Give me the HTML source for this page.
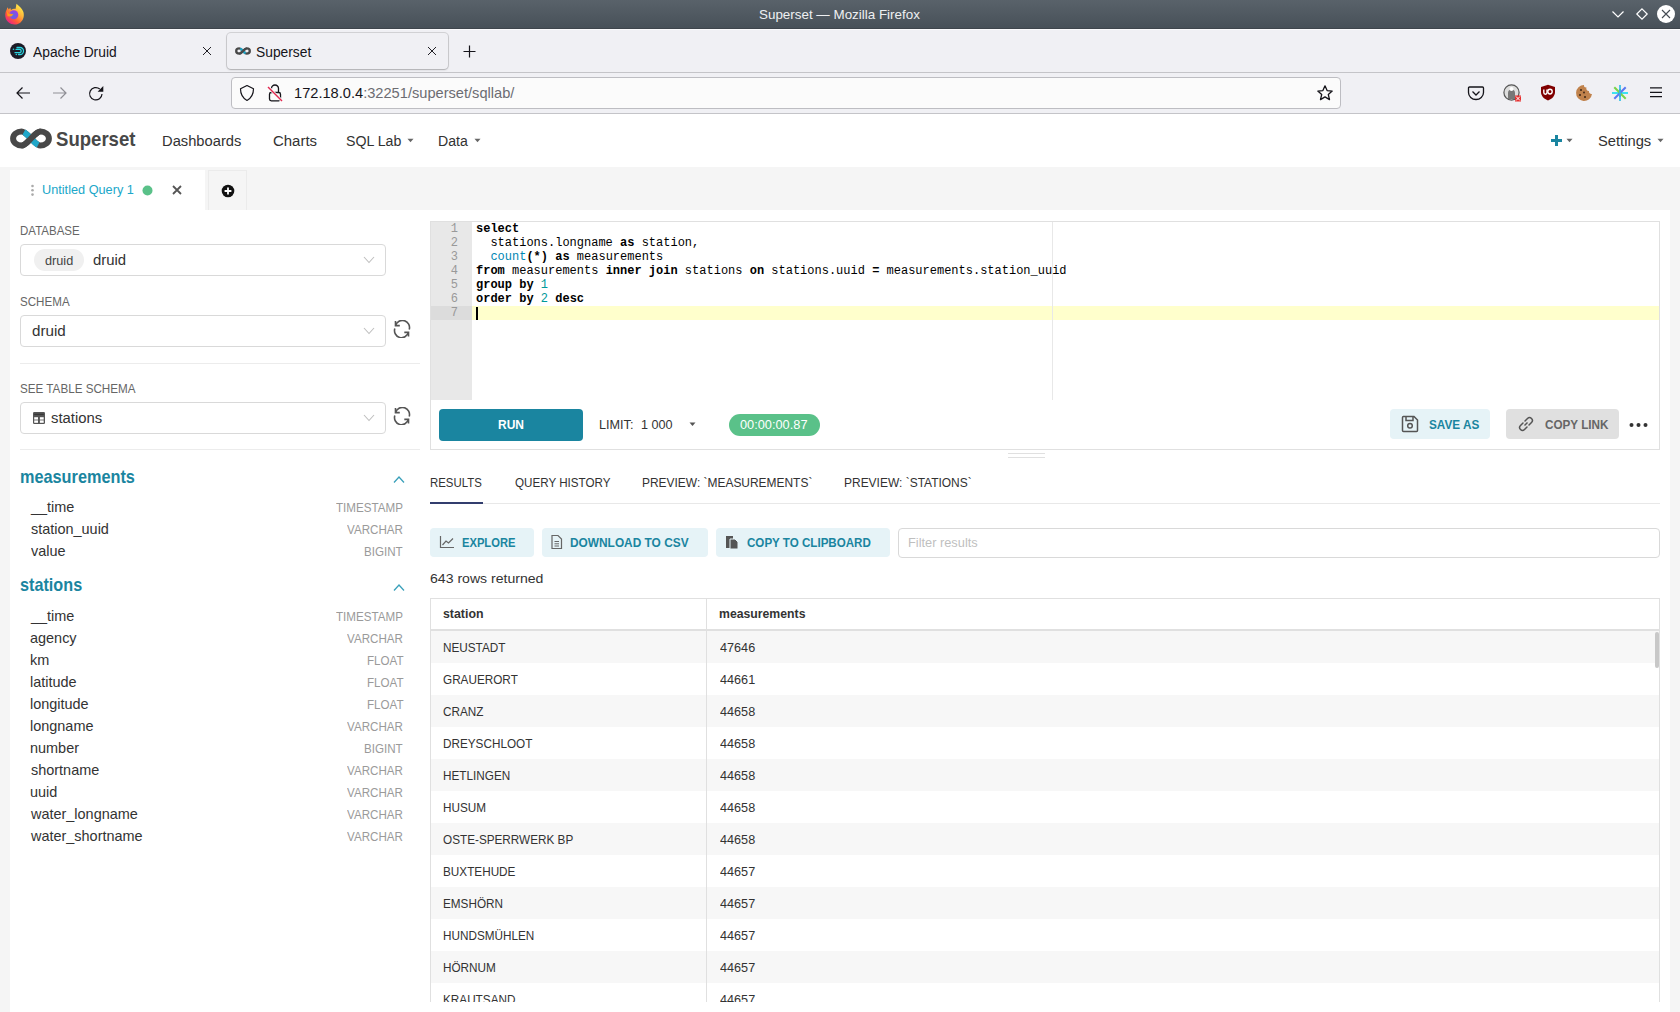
<!DOCTYPE html>
<html><head><meta charset="utf-8"><style>
*{margin:0;padding:0;box-sizing:border-box}
html,body{width:1680px;height:1012px;overflow:hidden;background:#fff;position:relative}
.r{position:absolute}
.tx{position:absolute;white-space:pre;line-height:normal}
</style></head><body>
<div class="r" style="left:0px;top:0px;width:1680px;height:29px;background:linear-gradient(#59626a,#475058)"></div>
<div class="r" style="left:0px;top:28px;width:1680px;height:1px;background:#3e454c"></div>
<svg class="r" style="left:3px;top:2px" width="22" height="24" viewBox="0 0 22 24"><defs><linearGradient id="ffo" x1="0.85" y1="0.1" x2="0.2" y2="0.95"><stop offset="0" stop-color="#fff04a"/><stop offset="0.35" stop-color="#ffb43a"/><stop offset="0.7" stop-color="#ff5a36"/><stop offset="1" stop-color="#e8208a"/></linearGradient>
<radialGradient id="ffp" cx="0.45" cy="0.6" r="0.6"><stop offset="0" stop-color="#5e6cdc"/><stop offset="1" stop-color="#9a3ee8"/></radialGradient></defs>
<path d="M13.5 1.8 C16 4 19 6.5 20.2 9.5 C21.5 13 20.8 17.5 17.8 20.2 C14.5 23.2 9 23.3 5.5 20.3 C2 17.3 1.3 12 3.5 8 L4.5 5.2 L5.8 7.4 L7.2 5.8 L8 8 C9.5 6.8 11.2 6.6 12.5 7 Z" fill="url(#ffo)"/>
<circle cx="10.8" cy="12.8" r="4.5" fill="url(#ffp)"/>
<path d="M3.8 8.5 L5.5 11.5 L10.5 12.3 L8.2 14.5 L4.5 14.2 Z" fill="#ff9a1a"/></svg>
<svg class="r" style="left:1608px;top:4px" width="72" height="22" viewBox="0 0 72 22"><polyline points="4.5,7.5 10,13 15.5,7.5" fill="none" stroke="#fff" stroke-width="1.2"/>
<polygon points="34,4.8 39.2,10 34,15.2 28.8,10" fill="none" stroke="#fff" stroke-width="1.2"/>
<circle cx="58" cy="10" r="9" fill="#fff"/><path d="M54 6 L62 14 M62 6 L54 14" stroke="#454b53" stroke-width="1.1"/></svg>
<div class="r" style="left:0px;top:29px;width:1680px;height:43px;background:#f0f0f4"></div>
<div class="r" style="left:0px;top:29px;width:1680px;height:1px;background:#fafafc"></div>
<div class="r" style="left:0px;top:72px;width:1680px;height:1px;background:#c4c4c8"></div>
<svg class="r" style="left:10px;top:43px" width="16" height="16" viewBox="0 0 16 16"><circle cx="8" cy="8" r="8" fill="#1c1a25"/>
<path d="M7 4.5 H10 A3.5 3.5 0 0 1 10 11.5 H8.5 M6 6.3 H9.5 A1.7 1.7 0 0 1 9.5 9.7 H5" fill="none" stroke="#2ad4e0" stroke-width="1.3" stroke-linecap="round"/>
<circle cx="3.5" cy="6.3" r="0.8" fill="#2ad4e0"/><circle cx="6.3" cy="11.5" r="0.8" fill="#2ad4e0"/></svg>
<svg class="r" style="left:201px;top:45px" width="12" height="12" viewBox="0 0 12 12"><path d="M2 2 L10 10 M10 2 L2 10" stroke="#15141a" stroke-width="0.95"/></svg>
<div class="r" style="left:227px;top:33px;width:221px;height:36px;background:#f0f0f4;border-radius:4px;box-shadow:0 0 0 1px rgba(0,0,0,.12),0 1px 2px rgba(0,0,0,.18)"></div>
<svg class="r" style="left:235px;top:47px" width="16" height="8" viewBox="0 0 16 8"><g fill="none" stroke-width="2.3" stroke="#484848">
<path d="M8 4 C9.5 5.5 10.5 6.6 11.7 6.6 A3.1 2.6 0 0 0 11.7 1.4 C10.5 1.4 9.5 2.5 8 4 C6.5 5.5 5.5 6.6 4.3 6.6 A3.1 2.6 0 0 1 4.3 1.4 C5.5 1.4 6.5 2.5 8 4 Z"/>
<path d="M4.3 1.4 C5.5 1.4 6.5 2.5 8 4 C9.5 5.5 10.5 6.6 11.7 6.6" stroke="#20a7c9" stroke-dasharray="0 1 7 100"/>
<path d="M4.3 6.6 C5.5 6.6 6.5 5.5 8 4 C9.5 2.5 10.5 1.4 11.7 1.4"/>
</g></svg>
<svg class="r" style="left:426px;top:45px" width="12" height="12" viewBox="0 0 12 12"><path d="M2 2 L10 10 M10 2 L2 10" stroke="#15141a" stroke-width="0.95"/></svg>
<svg class="r" style="left:462px;top:44px" width="15" height="15" viewBox="0 0 15 15"><path d="M7.5 1.5 V13.5 M1.5 7.5 H13.5" stroke="#15141a" stroke-width="1.2"/></svg>
<div class="r" style="left:0px;top:73px;width:1680px;height:40px;background:#f0f0f4"></div>
<div class="r" style="left:0px;top:113px;width:1680px;height:1px;background:#c4c4c8"></div>
<svg class="r" style="left:14px;top:85px" width="20" height="16" viewBox="0 0 20 16"><path d="M16 8 H3 M8.5 2.5 L3 8 L8.5 13.5" fill="none" stroke="#15141a" stroke-width="1.2"/></svg>
<svg class="r" style="left:50px;top:85px" width="20" height="16" viewBox="0 0 20 16"><path d="M3 8 H16 M10.5 2.5 L16 8 L10.5 13.5" fill="none" stroke="#8f8f95" stroke-width="1.2"/></svg>
<svg class="r" style="left:87px;top:85px" width="18" height="17" viewBox="0 0 18 17"><path d="M15 9 A6.2 6.2 0 1 1 12.8 4" fill="none" stroke="#15141a" stroke-width="1.2"/><path d="M16.3 1 V6.8 H10.6 Z" fill="#15141a"/></svg>
<div class="r" style="left:231px;top:77px;width:1110px;height:32px;background:#fbfbfb;border:1px solid #bdbdc2;border-radius:4px"></div>
<svg class="r" style="left:239px;top:84px" width="16" height="18" viewBox="0 0 16 18"><path d="M8 1.5 L14.5 4.8 C14.5 10 12.5 14 8 16.5 C3.5 14 1.5 10 1.5 4.8 Z" fill="none" stroke="#15141a" stroke-width="1.2" stroke-linejoin="round"/></svg>
<svg class="r" style="left:266px;top:83px" width="18" height="20" viewBox="0 0 18 20"><path d="M5.5 5.5 A3.5 3.5 0 0 1 12.5 5.5 V9.5" fill="none" stroke="#15141a" stroke-width="1.3"/><rect x="3.5" y="9.5" width="11" height="8.3" rx="1.8" fill="none" stroke="#15141a" stroke-width="1.3"/><path d="M2 4 L16 18" stroke="#fbfbfb" stroke-width="3"/><path d="M2 4 L16 18" stroke="#e22850" stroke-width="1.4"/></svg>
<svg class="r" style="left:1316px;top:84px" width="18" height="18" viewBox="0 0 18 18"><path d="M9 1.8 L11.1 6.6 L16.2 7.1 L12.3 10.5 L13.5 15.6 L9 12.9 L4.5 15.6 L5.7 10.5 L1.8 7.1 L6.9 6.6 Z" fill="none" stroke="#15141a" stroke-width="1.3" stroke-linejoin="round"/></svg>
<svg class="r" style="left:1467px;top:85px" width="18" height="16" viewBox="0 0 18 16"><path d="M2.5 2 H15.5 A1 1 0 0 1 16.5 3 V7.5 A7.5 7 0 0 1 1.5 7.5 V3 A1 1 0 0 1 2.5 2 Z" fill="none" stroke="#15141a" stroke-width="1.3"/><path d="M5.5 6.5 L9 10 L12.5 6.5" fill="none" stroke="#15141a" stroke-width="1.3"/></svg>
<svg class="r" style="left:1503px;top:84px" width="19" height="18" viewBox="0 0 19 18"><circle cx="8.5" cy="8.5" r="7.6" fill="#ddd" stroke="#555" stroke-width="1.2"/><path d="M5 15 V9 A3.5 3.5 0 0 1 12 9 V15" fill="#777"/><circle cx="8.5" cy="5" r="2" fill="#fff"/><rect x="12" y="11.5" width="6" height="6" fill="#e53030"/><path d="M13 12.5 L17 16.5 M17 12.5 L13 16.5" stroke="#fff" stroke-width="1"/></svg>
<svg class="r" style="left:1540px;top:84px" width="16" height="17" viewBox="0 0 16 17"><path d="M8 0.8 L15 3 V8 C15 12 12 15 8 16.5 C4 15 1 12 1 8 V3 Z" fill="#800000"/><path d="M3.8 5.5 V8.6 A1.6 1.6 0 0 0 7 8.6 V5.5" fill="none" stroke="#fff" stroke-width="1.4"/><ellipse cx="10" cy="7.6" rx="2.2" ry="2.4" fill="none" stroke="#fff" stroke-width="1.4"/></svg>
<svg class="r" style="left:1575px;top:84px" width="18" height="18" viewBox="0 0 18 18"><path d="M9 1 A8 8 0 1 0 17 10 A2.5 2.5 0 0 1 14 7 A2.5 2.5 0 0 1 11.5 3.5 A2.3 2.3 0 0 1 9 1 Z" fill="#c0824c"/><circle cx="6" cy="6" r="1" fill="#3a2414"/><circle cx="5" cy="11" r="1" fill="#3a2414"/><circle cx="10" cy="13" r="1" fill="#3a2414"/><circle cx="9" cy="8.5" r="0.9" fill="#3a2414"/></svg>
<svg class="r" style="left:1611px;top:84px" width="18" height="18" viewBox="0 0 18 18"><path d="M9 1 V17" stroke="#4fc8e8" stroke-width="2"/><path d="M1 9 H17" stroke="#3de0f0" stroke-width="2"/><path d="M3.3 3.3 L14.7 14.7" stroke="#78d448" stroke-width="2"/><path d="M14.7 3.3 L3.3 14.7" stroke="#5a78f0" stroke-width="2"/><path d="M9 5 V13" stroke="#3ab0e0" stroke-width="2"/></svg>
<svg class="r" style="left:1648px;top:85px" width="16" height="14" viewBox="0 0 16 14"><path d="M2 2.8 H14 M2 7.4 H14 M2 11.6 H14" stroke="#15141a" stroke-width="1.3"/></svg>
<div class="r" style="left:0px;top:114px;width:1680px;height:53px;background:#fff"></div>
<svg class="r" style="left:10px;top:127px" width="42" height="23" viewBox="0 0 42 23"><g fill="none" stroke-width="6" stroke="#484848">
<path d="M21 11.5 C25 15.5 27.5 18.5 30.4 18.5 A8.5 7 0 0 0 30.4 4.5 C27.5 4.5 25 7.5 21 11.5 C17 15.5 14.5 18.5 11.6 18.5 A8.5 7 0 0 1 11.6 4.5 C14.5 4.5 17 7.5 21 11.5 Z"/>
<path d="M11.6 4.5 C14.5 4.5 17 7.5 21 11.5 C25 15.5 27.5 18.5 30.4 18.5" stroke="#20a7c9" stroke-dasharray="0 2.4 19.2 100"/>
<path d="M11.6 18.5 C14.5 18.5 17 15.5 21 11.5 C25 7.5 27.5 4.5 30.4 4.5"/>
</g></svg>
<svg class="r" style="left:406.5px;top:138px" width="7" height="5" viewBox="0 0 7 5"><path d="M0.5 0.8 H6.5 L3.5 4.2 Z" fill="#666"/></svg>
<svg class="r" style="left:473.5px;top:138px" width="7" height="5" viewBox="0 0 7 5"><path d="M0.5 0.8 H6.5 L3.5 4.2 Z" fill="#666"/></svg>
<svg class="r" style="left:1565.5px;top:138px" width="7" height="5" viewBox="0 0 7 5"><path d="M0.5 0.8 H6.5 L3.5 4.2 Z" fill="#666"/></svg>
<svg class="r" style="left:1657.0px;top:138px" width="7" height="5" viewBox="0 0 7 5"><path d="M0.5 0.8 H6.5 L3.5 4.2 Z" fill="#666"/></svg>
<svg class="r" style="left:1550px;top:134px" width="13" height="13" viewBox="0 0 13 13"><path d="M6.5 1 V12 M1 6.5 H12" stroke="#1a85a0" stroke-width="3"/></svg>
<div class="r" style="left:0px;top:167px;width:1680px;height:845px;background:#f5f5f5"></div>
<div class="r" style="left:10px;top:170px;width:195px;height:42px;background:#fff"></div>
<div class="r" style="left:208px;top:170px;width:39px;height:40px;background:#f5f5f5;border:1px solid #ebebeb;border-bottom:none"></div>
<div class="r" style="left:10px;top:210px;width:1660px;height:802px;background:#fff"></div>
<svg class="r" style="left:30px;top:184px" width="6" height="13" viewBox="0 0 6 13"><circle cx="2.5" cy="2" r="1.3" fill="#aaa"/><circle cx="2.5" cy="6.3" r="1.3" fill="#aaa"/><circle cx="2.5" cy="10.6" r="1.3" fill="#aaa"/></svg>
<svg class="r" style="left:142px;top:185px" width="11" height="11" viewBox="0 0 11 11"><circle cx="5.5" cy="5.5" r="5" fill="#5ac189"/></svg>
<svg class="r" style="left:171px;top:184px" width="12" height="12" viewBox="0 0 12 12"><path d="M2 2 L10 10 M10 2 L2 10" stroke="#555" stroke-width="1.8"/></svg>
<svg class="r" style="left:221px;top:184px" width="14" height="14" viewBox="0 0 14 14"><circle cx="7" cy="7" r="6.3" fill="#111"/><path d="M7 3.6 V10.4 M3.6 7 H10.4" stroke="#fff" stroke-width="1.8"/></svg>
<div class="r" style="left:20px;top:244px;width:366px;height:32px;border:1px solid #d9d9d9;border-radius:4px;background:#fff"></div>
<div class="r" style="left:34px;top:249px;width:50px;height:22px;background:#f0f0f0;border-radius:11px"></div>
<div class="r" style="left:20px;top:315px;width:366px;height:32px;border:1px solid #d9d9d9;border-radius:4px;background:#fff"></div>
<div class="r" style="left:20px;top:363px;width:400px;height:1px;background:#ececec"></div>
<div class="r" style="left:20px;top:402px;width:366px;height:32px;border:1px solid #d9d9d9;border-radius:4px;background:#fff"></div>
<svg class="r" style="left:33px;top:412px" width="12" height="12" viewBox="0 0 12 12"><rect x="0" y="0" width="12" height="12" rx="1.2" fill="#555"/><rect x="1.2" y="1.8" width="9.6" height="1" fill="#333"/><rect x="1.2" y="5.2" width="3.8" height="2.4" fill="#fff"/><rect x="6.9" y="5.2" width="3.8" height="2.4" fill="#fff"/><rect x="1.2" y="8.4" width="3.8" height="2.4" fill="#fff"/><rect x="6.9" y="8.4" width="3.8" height="2.4" fill="#fff"/></svg>
<div class="r" style="left:20px;top:449px;width:400px;height:1px;background:#ececec"></div>
<svg class="r" style="left:363px;top:256px" width="12" height="8" viewBox="0 0 12 8"><path d="M1 1 L6 6.5 L11 1" fill="none" stroke="#bfbfbf" stroke-width="1.1"/></svg>
<svg class="r" style="left:363px;top:327px" width="12" height="8" viewBox="0 0 12 8"><path d="M1 1 L6 6.5 L11 1" fill="none" stroke="#bfbfbf" stroke-width="1.1"/></svg>
<svg class="r" style="left:363px;top:414px" width="12" height="8" viewBox="0 0 12 8"><path d="M1 1 L6 6.5 L11 1" fill="none" stroke="#bfbfbf" stroke-width="1.1"/></svg>
<svg class="r" style="left:393px;top:320px" width="18" height="18" viewBox="0 0 18 18"><g fill="none" stroke="#555" stroke-width="1.6"><path d="M2.6 5.4 A7 7 0 0 1 16.2 9.5"/><path d="M2.5 1 V5.6 H6.8"/><path d="M1.8 8.6 A7 7 0 0 0 15.4 12.6"/><path d="M11.3 12.4 H15.5 V16.6"/></g></svg>
<svg class="r" style="left:393px;top:407px" width="18" height="18" viewBox="0 0 18 18"><g fill="none" stroke="#555" stroke-width="1.6"><path d="M2.6 5.4 A7 7 0 0 1 16.2 9.5"/><path d="M2.5 1 V5.6 H6.8"/><path d="M1.8 8.6 A7 7 0 0 0 15.4 12.6"/><path d="M11.3 12.4 H15.5 V16.6"/></g></svg>
<svg class="r" style="left:393px;top:475px" width="12" height="9" viewBox="0 0 12 9"><path d="M1 7.5 L6 2 L11 7.5" fill="none" stroke="#3aa0ba" stroke-width="1.3"/></svg>
<svg class="r" style="left:393px;top:583px" width="12" height="9" viewBox="0 0 12 9"><path d="M1 7.5 L6 2 L11 7.5" fill="none" stroke="#3aa0ba" stroke-width="1.3"/></svg>
<div class="r" style="left:430px;top:221px;width:1230px;height:180px;border:1px solid #e0e0e0;background:#fff"></div>
<div class="r" style="left:431px;top:222px;width:41px;height:178px;background:#e8e8e8"></div>
<div class="r" style="left:472px;top:306px;width:1187px;height:14px;background:#ffffcc"></div>
<div class="r" style="left:431px;top:306px;width:41px;height:14px;background:#dcdcdc"></div>
<div class="r" style="left:1052px;top:222px;width:1px;height:178px;background:#e8e8e8"></div>
<div class="r" style="left:476px;top:307px;width:2px;height:13px;background:#000"></div>
<div class="r" style="left:430px;top:400px;width:1230px;height:50px;border:1px solid #e0e0e0;border-top:none;background:#fff"></div>
<div class="r" style="left:439px;top:409px;width:144px;height:32px;background:#1a85a0;border-radius:4px"></div>
<svg class="r" style="left:689px;top:422px" width="8" height="5" viewBox="0 0 8 5"><path d="M0.5 0.5 H6.5 L3.5 4 Z" fill="#555"/></svg>
<div class="r" style="left:729px;top:414px;width:91px;height:22px;background:#5ac189;border-radius:11px"></div>
<div class="r" style="left:1390px;top:409px;width:100px;height:30px;background:#e6f3f7;border-radius:4px"></div>
<svg class="r" style="left:1400px;top:414px" width="20" height="20" viewBox="0 0 20 20"><path d="M3 2.5 H14 L17.5 6 V16.5 A1 1 0 0 1 16.5 17.5 H3.5 A1 1 0 0 1 2.5 16.5 V3.5 A1 1 0 0 1 3.5 2.5 Z" fill="none" stroke="#555" stroke-width="1.5"/><path d="M6 2.5 V6.5 H13 V2.5" fill="none" stroke="#555" stroke-width="1.5"/><circle cx="10" cy="11.8" r="2.3" fill="none" stroke="#555" stroke-width="1.5"/></svg>
<div class="r" style="left:1506px;top:409px;width:113px;height:30px;background:#e0e0e0;border-radius:4px"></div>
<svg class="r" style="left:1516px;top:414px" width="20" height="20" viewBox="0 0 20 20"><path d="M8.5 11.5 L11.5 8.5" stroke="#555" stroke-width="1.5"/><path d="M7 9 L4.5 11.5 A2.8 2.8 0 0 0 8.5 15.5 L11 13 M9 7 L11.5 4.5 A2.8 2.8 0 0 1 15.5 8.5 L13 11" fill="none" stroke="#555" stroke-width="1.5" stroke-linecap="round"/></svg>
<svg class="r" style="left:1628px;top:421px" width="22" height="8" viewBox="0 0 22 8"><circle cx="3.5" cy="4" r="2" fill="#333"/><circle cx="10.5" cy="4" r="2" fill="#333"/><circle cx="17.5" cy="4" r="2" fill="#333"/></svg>
<div class="r" style="left:1008px;top:453px;width:37px;height:1px;background:#e0e0e0"></div>
<div class="r" style="left:1008px;top:457px;width:37px;height:1px;background:#e0e0e0"></div>
<div class="r" style="left:430px;top:503px;width:1230px;height:1px;background:#e8e8e8"></div>
<div class="r" style="left:430px;top:502px;width:53px;height:2px;background:#323d6e"></div>
<div class="r" style="left:430px;top:528px;width:104px;height:29px;background:#e6f3f7;border-radius:4px"></div>
<div class="r" style="left:542px;top:528px;width:166px;height:29px;background:#e6f3f7;border-radius:4px"></div>
<div class="r" style="left:716px;top:528px;width:174px;height:29px;background:#e6f3f7;border-radius:4px"></div>
<svg class="r" style="left:439px;top:535px" width="16" height="14" viewBox="0 0 16 14"><path d="M1.5 1 V12.5 H15" fill="none" stroke="#666" stroke-width="1.2"/><path d="M3.5 10 L7 6 L9.5 8 L14 3.5" fill="none" stroke="#666" stroke-width="1.2"/></svg>
<svg class="r" style="left:550px;top:534px" width="13" height="16" viewBox="0 0 13 16"><path d="M2 1.5 H8 L11.5 5 V14.5 H2 Z" fill="none" stroke="#666" stroke-width="1.2"/><path d="M4.5 7.5 H9 M4.5 9.8 H9 M4.5 12 H9" stroke="#666" stroke-width="1"/></svg>
<svg class="r" style="left:724px;top:534px" width="16" height="16" viewBox="0 0 16 16"><path d="M2 2 H9 V14 H2 Z" fill="#555"/><path d="M6 5 H11 L14 8 V15 H6 Z" fill="#555" stroke="#e6f3f7" stroke-width="1"/></svg>
<div class="r" style="left:898px;top:528px;width:762px;height:30px;border:1px solid #d9d9d9;border-radius:4px;background:#fff"></div>
<div class="r" style="left:430px;top:598px;width:1230px;height:404px;border:1px solid #e0e0e0;border-bottom:none;background:#fff;overflow:hidden"></div>
<div class="r" style="left:431px;top:629px;width:1228px;height:2px;background:#e0e0e0"></div>
<div class="r" style="left:431px;top:631px;width:1228px;height:32px;background:#f7f7f7"></div>
<div class="r" style="left:431px;top:695px;width:1228px;height:32px;background:#f7f7f7"></div>
<div class="r" style="left:431px;top:759px;width:1228px;height:32px;background:#f7f7f7"></div>
<div class="r" style="left:431px;top:823px;width:1228px;height:32px;background:#f7f7f7"></div>
<div class="r" style="left:431px;top:887px;width:1228px;height:32px;background:#f7f7f7"></div>
<div class="r" style="left:431px;top:951px;width:1228px;height:32px;background:#f7f7f7"></div>
<div class="r" style="left:706px;top:599px;width:1px;height:403px;background:#e0e0e0"></div>
<div class="r" style="left:1655px;top:632px;width:4px;height:36px;background:#c8c8c8;border-radius:2px"></div>
<div class="r" style="left:420px;top:1002px;width:1250px;height:10px;background:#fff"></div>
<div class="tx" style="left:758.60px;top:7.00px;font-family:'Liberation Sans';font-weight:400;font-size:13.5px;color:#eef0f2;transform:scaleX(0.9926);transform-origin:0 0">Superset — Mozilla Firefox</div>
<div class="tx" style="left:32.59px;top:44.00px;font-family:'Liberation Sans';font-weight:400;font-size:14px;color:#15141a;transform:scaleX(0.9859);transform-origin:0 0">Apache Druid</div>
<div class="tx" style="left:256.21px;top:44.00px;font-family:'Liberation Sans';font-weight:400;font-size:14px;color:#15141a;transform:scaleX(0.9858);transform-origin:0 0">Superset</div>
<div class="tx" style="left:293.61px;top:84.00px;font-family:'Liberation Sans';font-weight:400;font-size:15px;color:#15141a;transform:scaleX(0.9752);transform-origin:0 0">172.18.0.4<span style="color:#6c6c72">:32251/superset/sqllab/</span></div>
<div class="tx" style="left:55.90px;top:127.00px;font-family:'Liberation Sans';font-weight:700;font-size:21px;color:#484848;transform:scaleX(0.8841);transform-origin:0 0">Superset</div>
<div class="tx" style="left:161.62px;top:132.00px;font-family:'Liberation Sans';font-weight:400;font-size:15.5px;color:#323232;transform:scaleX(0.9495);transform-origin:0 0">Dashboards</div>
<div class="tx" style="left:273.31px;top:132.00px;font-family:'Liberation Sans';font-weight:400;font-size:15.5px;color:#323232;transform:scaleX(0.9646);transform-origin:0 0">Charts</div>
<div class="tx" style="left:345.63px;top:132.00px;font-family:'Liberation Sans';font-weight:400;font-size:15.5px;color:#323232;transform:scaleX(0.9136);transform-origin:0 0">SQL Lab</div>
<div class="tx" style="left:437.64px;top:132.00px;font-family:'Liberation Sans';font-weight:400;font-size:15.5px;color:#323232;transform:scaleX(0.9096);transform-origin:0 0">Data</div>
<div class="tx" style="left:1597.62px;top:132.00px;font-family:'Liberation Sans';font-weight:400;font-size:15.5px;color:#323232;transform:scaleX(0.9502);transform-origin:0 0">Settings</div>
<div class="tx" style="left:42.21px;top:181.70px;font-family:'Liberation Sans';font-weight:400;font-size:13px;color:#20a7c9;transform:scaleX(0.9777);transform-origin:0 0">Untitled Query 1</div>
<div class="tx" style="left:20.03px;top:224.40px;font-family:'Liberation Sans';font-weight:400;font-size:12.5px;color:#666;transform:scaleX(0.9202);transform-origin:0 0">DATABASE</div>
<div class="tx" style="left:45.14px;top:253.50px;font-family:'Liberation Sans';font-weight:400;font-size:12px;color:#444;transform:scaleX(1.0588);transform-origin:0 0">druid</div>
<div class="tx" style="left:92.59px;top:252.00px;font-family:'Liberation Sans';font-weight:400;font-size:14.7px;color:#333;transform:scaleX(1.0155);transform-origin:0 0">druid</div>
<div class="tx" style="left:20.03px;top:295.00px;font-family:'Liberation Sans';font-weight:400;font-size:12.5px;color:#666;transform:scaleX(0.9280);transform-origin:0 0">SCHEMA</div>
<div class="tx" style="left:31.79px;top:323.20px;font-family:'Liberation Sans';font-weight:400;font-size:14.7px;color:#333;transform:scaleX(1.0342);transform-origin:0 0">druid</div>
<div class="tx" style="left:20.03px;top:382.30px;font-family:'Liberation Sans';font-weight:400;font-size:12.5px;color:#666;transform:scaleX(0.9324);transform-origin:0 0">SEE TABLE SCHEMA</div>
<div class="tx" style="left:50.91px;top:410.00px;font-family:'Liberation Sans';font-weight:400;font-size:14.7px;color:#333;transform:scaleX(1.0117);transform-origin:0 0">stations</div>
<div class="tx" style="left:20.05px;top:466.20px;font-family:'Liberation Sans';font-weight:700;font-size:18.5px;color:#1a85a0;transform:scaleX(0.8794);transform-origin:0 0">measurements</div>
<div class="tx" style="left:31.01px;top:499.10px;font-family:'Liberation Sans';font-weight:400;font-size:14.2px;color:#333;transform:scaleX(1.0181);transform-origin:0 0">__time</div>
<div class="tx" style="left:336.26px;top:501.10px;font-family:'Liberation Sans';font-weight:400;font-size:12.5px;color:#9a9a9a;transform:scaleX(0.9290);transform-origin:0 0">TIMESTAMP</div>
<div class="tx" style="left:31.01px;top:521.10px;font-family:'Liberation Sans';font-weight:400;font-size:14.2px;color:#333;transform:scaleX(1.0181);transform-origin:0 0">station_uuid</div>
<div class="tx" style="left:347.40px;top:523.10px;font-family:'Liberation Sans';font-weight:400;font-size:12.5px;color:#9a9a9a;transform:scaleX(0.9290);transform-origin:0 0">VARCHAR</div>
<div class="tx" style="left:31.01px;top:543.10px;font-family:'Liberation Sans';font-weight:400;font-size:14.2px;color:#333;transform:scaleX(1.0181);transform-origin:0 0">value</div>
<div class="tx" style="left:364.13px;top:545.10px;font-family:'Liberation Sans';font-weight:400;font-size:12.5px;color:#9a9a9a;transform:scaleX(0.9290);transform-origin:0 0">BIGINT</div>
<div class="tx" style="left:20.05px;top:574.00px;font-family:'Liberation Sans';font-weight:700;font-size:18.5px;color:#1a85a0;transform:scaleX(0.8761);transform-origin:0 0">stations</div>
<div class="tx" style="left:31.01px;top:608.20px;font-family:'Liberation Sans';font-weight:400;font-size:14.2px;color:#333;transform:scaleX(1.0181);transform-origin:0 0">__time</div>
<div class="tx" style="left:336.26px;top:610.20px;font-family:'Liberation Sans';font-weight:400;font-size:12.5px;color:#9a9a9a;transform:scaleX(0.9290);transform-origin:0 0">TIMESTAMP</div>
<div class="tx" style="left:29.99px;top:630.20px;font-family:'Liberation Sans';font-weight:400;font-size:14.2px;color:#333;transform:scaleX(1.0181);transform-origin:0 0">agency</div>
<div class="tx" style="left:347.40px;top:632.20px;font-family:'Liberation Sans';font-weight:400;font-size:12.5px;color:#9a9a9a;transform:scaleX(0.9290);transform-origin:0 0">VARCHAR</div>
<div class="tx" style="left:29.99px;top:652.20px;font-family:'Liberation Sans';font-weight:400;font-size:14.2px;color:#333;transform:scaleX(1.0181);transform-origin:0 0">km</div>
<div class="tx" style="left:366.91px;top:654.20px;font-family:'Liberation Sans';font-weight:400;font-size:12.5px;color:#9a9a9a;transform:scaleX(0.9290);transform-origin:0 0">FLOAT</div>
<div class="tx" style="left:29.99px;top:674.20px;font-family:'Liberation Sans';font-weight:400;font-size:14.2px;color:#333;transform:scaleX(1.0181);transform-origin:0 0">latitude</div>
<div class="tx" style="left:366.91px;top:676.20px;font-family:'Liberation Sans';font-weight:400;font-size:12.5px;color:#9a9a9a;transform:scaleX(0.9290);transform-origin:0 0">FLOAT</div>
<div class="tx" style="left:29.99px;top:696.20px;font-family:'Liberation Sans';font-weight:400;font-size:14.2px;color:#333;transform:scaleX(1.0181);transform-origin:0 0">longitude</div>
<div class="tx" style="left:366.91px;top:698.20px;font-family:'Liberation Sans';font-weight:400;font-size:12.5px;color:#9a9a9a;transform:scaleX(0.9290);transform-origin:0 0">FLOAT</div>
<div class="tx" style="left:29.99px;top:718.20px;font-family:'Liberation Sans';font-weight:400;font-size:14.2px;color:#333;transform:scaleX(1.0181);transform-origin:0 0">longname</div>
<div class="tx" style="left:347.40px;top:720.20px;font-family:'Liberation Sans';font-weight:400;font-size:12.5px;color:#9a9a9a;transform:scaleX(0.9290);transform-origin:0 0">VARCHAR</div>
<div class="tx" style="left:29.99px;top:740.20px;font-family:'Liberation Sans';font-weight:400;font-size:14.2px;color:#333;transform:scaleX(1.0181);transform-origin:0 0">number</div>
<div class="tx" style="left:364.13px;top:742.20px;font-family:'Liberation Sans';font-weight:400;font-size:12.5px;color:#9a9a9a;transform:scaleX(0.9290);transform-origin:0 0">BIGINT</div>
<div class="tx" style="left:31.01px;top:762.20px;font-family:'Liberation Sans';font-weight:400;font-size:14.2px;color:#333;transform:scaleX(1.0181);transform-origin:0 0">shortname</div>
<div class="tx" style="left:347.40px;top:764.20px;font-family:'Liberation Sans';font-weight:400;font-size:12.5px;color:#9a9a9a;transform:scaleX(0.9290);transform-origin:0 0">VARCHAR</div>
<div class="tx" style="left:29.99px;top:784.20px;font-family:'Liberation Sans';font-weight:400;font-size:14.2px;color:#333;transform:scaleX(1.0181);transform-origin:0 0">uuid</div>
<div class="tx" style="left:347.40px;top:786.20px;font-family:'Liberation Sans';font-weight:400;font-size:12.5px;color:#9a9a9a;transform:scaleX(0.9290);transform-origin:0 0">VARCHAR</div>
<div class="tx" style="left:31.01px;top:806.20px;font-family:'Liberation Sans';font-weight:400;font-size:14.2px;color:#333;transform:scaleX(1.0181);transform-origin:0 0">water_longname</div>
<div class="tx" style="left:347.40px;top:808.20px;font-family:'Liberation Sans';font-weight:400;font-size:12.5px;color:#9a9a9a;transform:scaleX(0.9290);transform-origin:0 0">VARCHAR</div>
<div class="tx" style="left:31.01px;top:828.20px;font-family:'Liberation Sans';font-weight:400;font-size:14.2px;color:#333;transform:scaleX(1.0181);transform-origin:0 0">water_shortname</div>
<div class="tx" style="left:347.40px;top:830.20px;font-family:'Liberation Sans';font-weight:400;font-size:12.5px;color:#9a9a9a;transform:scaleX(0.9290);transform-origin:0 0">VARCHAR</div>
<div class="tx" style="left:450.80px;top:222.00px;font-family:'Liberation Mono';font-weight:400;font-size:12px;color:#999">1</div>
<div class="tx" style="left:450.80px;top:236.00px;font-family:'Liberation Mono';font-weight:400;font-size:12px;color:#999">2</div>
<div class="tx" style="left:450.80px;top:250.00px;font-family:'Liberation Mono';font-weight:400;font-size:12px;color:#999">3</div>
<div class="tx" style="left:450.80px;top:264.00px;font-family:'Liberation Mono';font-weight:400;font-size:12px;color:#999">4</div>
<div class="tx" style="left:450.80px;top:278.00px;font-family:'Liberation Mono';font-weight:400;font-size:12px;color:#999">5</div>
<div class="tx" style="left:450.80px;top:292.00px;font-family:'Liberation Mono';font-weight:400;font-size:12px;color:#999">6</div>
<div class="tx" style="left:450.80px;top:306.00px;font-family:'Liberation Mono';font-weight:400;font-size:12px;color:#999">7</div>
<div class="tx" style="left:476.00px;top:222.00px;font-family:'Liberation Mono';font-weight:400;font-size:12px;color:#000;font-kerning:none"><b style="color:#000">select</b></div>
<div class="tx" style="left:476.00px;top:236.00px;font-family:'Liberation Mono';font-weight:400;font-size:12px;color:#000;font-kerning:none">  stations.longname <b style="color:#000">as</b> station,</div>
<div class="tx" style="left:476.00px;top:250.00px;font-family:'Liberation Mono';font-weight:400;font-size:12px;color:#000;font-kerning:none">  <span style="color:#0086b3">count</span><b style="color:#000">(*)</b> <b style="color:#000">as</b> measurements</div>
<div class="tx" style="left:476.00px;top:264.00px;font-family:'Liberation Mono';font-weight:400;font-size:12px;color:#000;font-kerning:none"><b style="color:#000">from</b> measurements <b style="color:#000">inner</b> <b style="color:#000">join</b> stations <b style="color:#000">on</b> stations.uuid <b style="color:#000">=</b> measurements.station_uuid</div>
<div class="tx" style="left:476.00px;top:278.00px;font-family:'Liberation Mono';font-weight:400;font-size:12px;color:#000;font-kerning:none"><b style="color:#000">group</b> <b style="color:#000">by</b> <span style="color:#099">1</span></div>
<div class="tx" style="left:476.00px;top:292.00px;font-family:'Liberation Mono';font-weight:400;font-size:12px;color:#000;font-kerning:none"><b style="color:#000">order</b> <b style="color:#000">by</b> <span style="color:#099">2</span> <b style="color:#000">desc</b></div>
<div class="tx" style="left:497.89px;top:417.25px;font-family:'Liberation Sans';font-weight:700;font-size:13.4px;color:#fff;transform:scaleX(0.8954);transform-origin:0 0">RUN</div>
<div class="tx" style="left:598.86px;top:417.25px;font-family:'Liberation Sans';font-weight:400;font-size:13px;color:#333;transform:scaleX(0.9722);transform-origin:0 0">LIMIT:</div>
<div class="tx" style="left:640.86px;top:417.25px;font-family:'Liberation Sans';font-weight:400;font-size:13px;color:#333;transform:scaleX(0.9705);transform-origin:0 0">1 000</div>
<div class="tx" style="left:740.09px;top:417.25px;font-family:'Liberation Sans';font-weight:400;font-size:13px;color:#fff;transform:scaleX(0.9827);transform-origin:0 0">00:00:00.87</div>
<div class="tx" style="left:1428.65px;top:417.00px;font-family:'Liberation Sans';font-weight:700;font-size:13.4px;color:#1a85a0;transform:scaleX(0.8776);transform-origin:0 0">SAVE AS</div>
<div class="tx" style="left:1545.32px;top:417.00px;font-family:'Liberation Sans';font-weight:700;font-size:13.4px;color:#666;transform:scaleX(0.8743);transform-origin:0 0">COPY LINK</div>
<div class="tx" style="left:430.06px;top:475.30px;font-family:'Liberation Sans';font-weight:400;font-size:13.5px;color:#323232;transform:scaleX(0.8448);transform-origin:0 0">RESULTS</div>
<div class="tx" style="left:514.66px;top:475.30px;font-family:'Liberation Sans';font-weight:400;font-size:13.5px;color:#323232;transform:scaleX(0.8612);transform-origin:0 0">QUERY HISTORY</div>
<div class="tx" style="left:642.25px;top:475.30px;font-family:'Liberation Sans';font-weight:400;font-size:13.5px;color:#323232;transform:scaleX(0.8849);transform-origin:0 0">PREVIEW: `MEASUREMENTS`</div>
<div class="tx" style="left:844.25px;top:475.30px;font-family:'Liberation Sans';font-weight:400;font-size:13.5px;color:#323232;transform:scaleX(0.8869);transform-origin:0 0">PREVIEW: `STATIONS`</div>
<div class="tx" style="left:461.76px;top:535.00px;font-family:'Liberation Sans';font-weight:700;font-size:13px;color:#1a85a0;transform:scaleX(0.8601);transform-origin:0 0">EXPLORE</div>
<div class="tx" style="left:569.83px;top:535.00px;font-family:'Liberation Sans';font-weight:700;font-size:13px;color:#1a85a0;transform:scaleX(0.9140);transform-origin:0 0">DOWNLOAD TO CSV</div>
<div class="tx" style="left:746.73px;top:535.00px;font-family:'Liberation Sans';font-weight:700;font-size:13px;color:#1a85a0;transform:scaleX(0.8916);transform-origin:0 0">COPY TO CLIPBOARD</div>
<div class="tx" style="left:908.01px;top:535.00px;font-family:'Liberation Sans';font-weight:400;font-size:13px;color:#bfbfbf;transform:scaleX(0.9843);transform-origin:0 0">Filter results</div>
<div class="tx" style="left:429.98px;top:570.90px;font-family:'Liberation Sans';font-weight:400;font-size:13.5px;color:#333;transform:scaleX(1.0425);transform-origin:0 0">643 rows returned</div>
<div class="tx" style="left:442.72px;top:606.00px;font-family:'Liberation Sans';font-weight:700;font-size:13px;color:#333;transform:scaleX(0.9502);transform-origin:0 0">station</div>
<div class="tx" style="left:718.62px;top:606.00px;font-family:'Liberation Sans';font-weight:700;font-size:13px;color:#333;transform:scaleX(0.9419);transform-origin:0 0">measurements</div>
<div class="tx" style="left:442.74px;top:640.20px;font-family:'Liberation Sans';font-weight:400;font-size:13px;color:#333;transform:scaleX(0.9032);transform-origin:0 0">NEUSTADT</div>
<div class="tx" style="left:719.88px;top:640.20px;font-family:'Liberation Sans';font-weight:400;font-size:13px;color:#333;transform:scaleX(0.9731);transform-origin:0 0">47646</div>
<div class="tx" style="left:442.74px;top:672.20px;font-family:'Liberation Sans';font-weight:400;font-size:13px;color:#333;transform:scaleX(0.9032);transform-origin:0 0">GRAUERORT</div>
<div class="tx" style="left:719.88px;top:672.20px;font-family:'Liberation Sans';font-weight:400;font-size:13px;color:#333;transform:scaleX(0.9731);transform-origin:0 0">44661</div>
<div class="tx" style="left:442.74px;top:704.20px;font-family:'Liberation Sans';font-weight:400;font-size:13px;color:#333;transform:scaleX(0.9032);transform-origin:0 0">CRANZ</div>
<div class="tx" style="left:719.88px;top:704.20px;font-family:'Liberation Sans';font-weight:400;font-size:13px;color:#333;transform:scaleX(0.9731);transform-origin:0 0">44658</div>
<div class="tx" style="left:442.74px;top:736.20px;font-family:'Liberation Sans';font-weight:400;font-size:13px;color:#333;transform:scaleX(0.9032);transform-origin:0 0">DREYSCHLOOT</div>
<div class="tx" style="left:719.88px;top:736.20px;font-family:'Liberation Sans';font-weight:400;font-size:13px;color:#333;transform:scaleX(0.9731);transform-origin:0 0">44658</div>
<div class="tx" style="left:442.74px;top:768.20px;font-family:'Liberation Sans';font-weight:400;font-size:13px;color:#333;transform:scaleX(0.9032);transform-origin:0 0">HETLINGEN</div>
<div class="tx" style="left:719.88px;top:768.20px;font-family:'Liberation Sans';font-weight:400;font-size:13px;color:#333;transform:scaleX(0.9731);transform-origin:0 0">44658</div>
<div class="tx" style="left:442.74px;top:800.20px;font-family:'Liberation Sans';font-weight:400;font-size:13px;color:#333;transform:scaleX(0.9032);transform-origin:0 0">HUSUM</div>
<div class="tx" style="left:719.88px;top:800.20px;font-family:'Liberation Sans';font-weight:400;font-size:13px;color:#333;transform:scaleX(0.9731);transform-origin:0 0">44658</div>
<div class="tx" style="left:442.74px;top:832.20px;font-family:'Liberation Sans';font-weight:400;font-size:13px;color:#333;transform:scaleX(0.9032);transform-origin:0 0">OSTE-SPERRWERK BP</div>
<div class="tx" style="left:719.88px;top:832.20px;font-family:'Liberation Sans';font-weight:400;font-size:13px;color:#333;transform:scaleX(0.9731);transform-origin:0 0">44658</div>
<div class="tx" style="left:442.74px;top:864.20px;font-family:'Liberation Sans';font-weight:400;font-size:13px;color:#333;transform:scaleX(0.9032);transform-origin:0 0">BUXTEHUDE</div>
<div class="tx" style="left:719.88px;top:864.20px;font-family:'Liberation Sans';font-weight:400;font-size:13px;color:#333;transform:scaleX(0.9731);transform-origin:0 0">44657</div>
<div class="tx" style="left:442.74px;top:896.20px;font-family:'Liberation Sans';font-weight:400;font-size:13px;color:#333;transform:scaleX(0.9032);transform-origin:0 0">EMSHÖRN</div>
<div class="tx" style="left:719.88px;top:896.20px;font-family:'Liberation Sans';font-weight:400;font-size:13px;color:#333;transform:scaleX(0.9731);transform-origin:0 0">44657</div>
<div class="tx" style="left:442.74px;top:928.20px;font-family:'Liberation Sans';font-weight:400;font-size:13px;color:#333;transform:scaleX(0.9032);transform-origin:0 0">HUNDSMÜHLEN</div>
<div class="tx" style="left:719.88px;top:928.20px;font-family:'Liberation Sans';font-weight:400;font-size:13px;color:#333;transform:scaleX(0.9731);transform-origin:0 0">44657</div>
<div class="tx" style="left:442.74px;top:960.20px;font-family:'Liberation Sans';font-weight:400;font-size:13px;color:#333;transform:scaleX(0.9032);transform-origin:0 0">HÖRNUM</div>
<div class="tx" style="left:719.88px;top:960.20px;font-family:'Liberation Sans';font-weight:400;font-size:13px;color:#333;transform:scaleX(0.9731);transform-origin:0 0">44657</div>
<div class="tx" style="left:442.74px;top:992.20px;font-family:'Liberation Sans';font-weight:400;font-size:13px;color:#333;transform:scaleX(0.9032);transform-origin:0 0">KRAUTSAND</div>
<div class="tx" style="left:719.88px;top:992.20px;font-family:'Liberation Sans';font-weight:400;font-size:13px;color:#333;transform:scaleX(0.9731);transform-origin:0 0">44657</div>
<div class="r" style="left:420px;top:1002px;width:1250px;height:10px;background:#fff"></div>
</body></html>
